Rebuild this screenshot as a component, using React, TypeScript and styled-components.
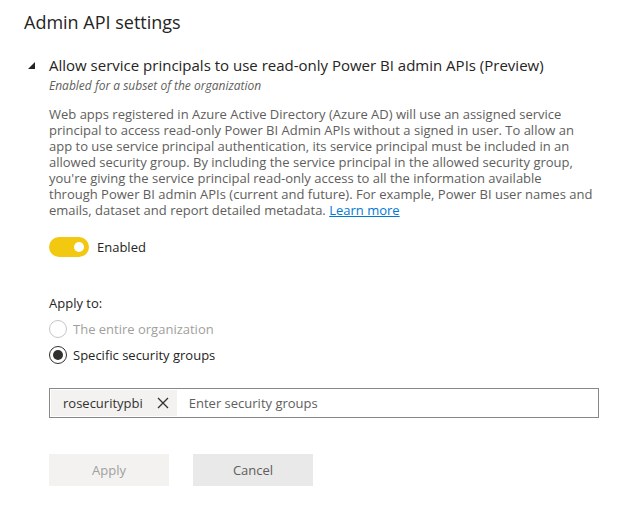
import styled, { createGlobalStyle } from 'styled-components';

const GlobalStyle = createGlobalStyle`
  body {
    margin: 0;
    background: #ffffff;
    font-family: 'Open Sans', 'Noto Sans', sans-serif;
    color: #252423;
  }
`;

const Page = styled.div`
  padding: 10px 24px 20px 24px;
`;

const Title = styled.h1`
  margin: 0;
  font-size: 18px;
  font-weight: 400;
  line-height: 24px;
  color: #252423;
`;

const Setting = styled.section`
  margin-top: 20px;
  display: grid;
  grid-template-columns: 25px 1fr;
`;

const Caret = styled.span`
  width: 0;
  height: 0;
  margin: 8px 0 0 4px;
  border-left: 7px solid transparent;
  border-bottom: 7px solid #252423;
`;

const Body = styled.div`
  display: flex;
  flex-direction: column;
`;

const SettingName = styled.h2`
  margin: 0;
  font-size: 15px;
  font-weight: 400;
  line-height: 22px;
  white-space: nowrap;
  color: #252423;
`;

const Status = styled.div`
  margin-top: 1px;
  font-size: 12px;
  font-style: italic;
  line-height: 18px;
  color: #605e5c;
`;

const Description = styled.p`
  margin: 11px 0 0;
  font-size: 13px;
  line-height: 16px;
  color: #605e5c;
  white-space: nowrap;
`;

const Link = styled.a`
  color: #0078d4;
  text-decoration: underline;
`;

const ToggleRow = styled.label`
  display: flex;
  align-items: center;
  gap: 8px;
  margin-top: 19px;
  font-size: 13px;
  color: #252423;
`;

const Track = styled.span<{ $on: boolean }>`
  width: 40px;
  height: 20px;
  border-radius: 10px;
  background: ${({ $on }) => ($on ? '#f2c811' : '#c8c6c4')};
  display: flex;
  align-items: center;
  justify-content: ${({ $on }) => ($on ? 'flex-end' : 'flex-start')};
  padding: 0 5px;
  box-sizing: border-box;
`;

const Knob = styled.span`
  width: 10px;
  height: 10px;
  border-radius: 50%;
  background: #ffffff;
`;

const ApplyLabel = styled.div`
  margin-top: 37px;
  font-size: 13px;
  line-height: 18px;
  color: #252423;
`;

const RadioList = styled.div`
  display: flex;
  flex-direction: column;
  gap: 8px;
  margin-top: 8px;
`;

const RadioRow = styled.label<{ $disabled?: boolean }>`
  display: flex;
  align-items: center;
  gap: 6px;
  font-size: 13px;
  line-height: 18px;
  color: ${({ $disabled }) => ($disabled ? '#a19f9d' : '#252423')};
`;

const RadioCircle = styled.span<{ $checked?: boolean; $disabled?: boolean }>`
  width: 18px;
  height: 18px;
  box-sizing: border-box;
  border-radius: 50%;
  border: 1px solid ${({ $disabled }) => ($disabled ? '#c8c6c4' : '#323130')};
  display: flex;
  align-items: center;
  justify-content: center;

  &::after {
    content: '';
    width: 10px;
    height: 10px;
    border-radius: 50%;
    background: ${({ $checked }) => ($checked ? '#323130' : 'transparent')};
  }
`;

const PickerBox = styled.div`
  margin-top: 24px;
  width: 550px;
  height: 30px;
  box-sizing: border-box;
  border: 1px solid #8a8886;
  display: flex;
  align-items: center;
  padding: 1px;
`;

const Chip = styled.span`
  display: flex;
  align-items: center;
  height: 26px;
  background: #f3f2f1;
  padding: 0 6px 0 12px;
  gap: 12px;
  font-size: 13px;
  color: #323130;
`;

const ChipClose = styled.span`
  display: flex;
  width: 16px;
  height: 16px;
  align-items: center;
  justify-content: center;
`;

const PickerInput = styled.input`
  flex: 1;
  border: none;
  outline: none;
  margin-left: 12px;
  padding: 0;
  font-family: inherit;
  font-size: 13px;
  color: #323130;
  background: transparent;

  &::placeholder {
    color: #605e5c;
  }
`;

const Actions = styled.div`
  display: flex;
  gap: 24px;
  margin-top: 36px;
`;

const Button = styled.button<{ $disabled?: boolean }>`
  width: 120px;
  height: 32px;
  border: none;
  font-family: inherit;
  font-size: 13px;
  background: ${({ $disabled }) => ($disabled ? '#f3f2f1' : '#e9e9e9')};
  color: ${({ $disabled }) => ($disabled ? '#a19f9d' : '#605e5c')};
`;

export default function App() {
  return (
    <>
      <GlobalStyle />
      <Page>
        <Title>Admin API settings</Title>
        <Setting>
          <Caret />
          <Body>
            <SettingName>
              Allow service principals to use read-only Power BI admin APIs (Preview)
            </SettingName>
            <Status>Enabled for a subset of the organization</Status>
            <Description>
              Web apps registered in Azure Active Directory (Azure AD) will use an assigned service
              <br />
              principal to access read-only Power BI Admin APIs without a signed in user. To allow an
              <br />
              app to use service principal authentication, its service principal must be included in an
              <br />
              allowed security group. By including the service principal in the allowed security group,
              <br />
              you're giving the service principal read-only access to all the information available
              <br />
              through Power BI admin APIs (current and future). For example, Power BI user names and
              <br />
              emails, dataset and report detailed metadata. <Link href="#">Learn more</Link>
            </Description>
            <ToggleRow>
              <Track $on>
                <Knob />
              </Track>
              Enabled
            </ToggleRow>
            <ApplyLabel>Apply to:</ApplyLabel>
            <RadioList>
              <RadioRow $disabled>
                <RadioCircle $disabled />
                The entire organization
              </RadioRow>
              <RadioRow>
                <RadioCircle $checked />
                Specific security groups
              </RadioRow>
            </RadioList>
            <PickerBox>
              <Chip>
                rosecuritypbi
                <ChipClose>
                  <svg width="12" height="12" viewBox="0 0 12 12">
                    <path d="M1 1 L11 11 M11 1 L1 11" stroke="#323130" strokeWidth="1.3" />
                  </svg>
                </ChipClose>
              </Chip>
              <PickerInput placeholder="Enter security groups" />
            </PickerBox>
            <Actions>
              <Button $disabled>Apply</Button>
              <Button>Cancel</Button>
            </Actions>
          </Body>
        </Setting>
      </Page>
    </>
  );
}
